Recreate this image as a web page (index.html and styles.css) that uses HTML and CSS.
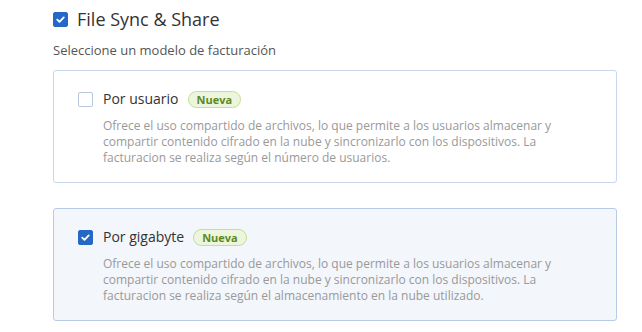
FILE: index.html
```html
<!DOCTYPE html>
<html lang="es">
<head>
    <meta charset="UTF-8">
    <title>File Sync & Share</title>
    <link rel="stylesheet" href="styles.css">
</head>
<body>
    <div class="service">
        <label class="service-header">
            <span class="check checked">
                <svg viewBox="0 0 14 14"><path d="M3.5 7.2l2.4 2.3 4.6-4.8" /></svg>
            </span>
            <span class="service-title">File Sync &amp; Share</span>
        </label>

        <p class="hint">Seleccione un modelo de facturación</p>

        <div class="plan">
            <div class="plan-head">
                <span class="check"></span>
                <span class="plan-name">Por usuario</span>
                <span class="badge">Nueva</span>
            </div>
            <p class="plan-desc">Ofrece el uso compartido de archivos, lo que permite a los usuarios almacenar y compartir contenido cifrado en la nube y sincronizarlo con los dispositivos. La facturacion se realiza según el número de usuarios.</p>
        </div>

        <div class="plan selected">
            <div class="plan-head">
                <span class="check checked">
                    <svg viewBox="0 0 14 14"><path d="M3.5 7.2l2.4 2.3 4.6-4.8" /></svg>
                </span>
                <span class="plan-name">Por gigabyte</span>
                <span class="badge">Nueva</span>
            </div>
            <p class="plan-desc">Ofrece el uso compartido de archivos, lo que permite a los usuarios almacenar y compartir contenido cifrado en la nube y sincronizarlo con los dispositivos. La facturacion se realiza según el almacenamiento en la nube utilizado.</p>
        </div>
    </div>
</body>
</html>
```

FILE: styles.css
```css
body {
    font-family: "Open Sans", Arial, sans-serif;
    background-color: #fff;
    color: #333;
    margin: 0;
}
.service {
    padding: 7px 25px 0 53px;
}
.service-header {
    display: flex;
    align-items: center;
    gap: 9px;
}
.service-title {
    font-size: 18px;
    color: #333;
}
.hint {
    margin: 10px 0 11px;
    font-size: 13px;
    color: #555;
}
.check {
    width: 15px;
    height: 15px;
    border: 1px solid #b8c6dc;
    border-radius: 2px;
    background-color: #fff;
    box-sizing: border-box;
    display: inline-flex;
    flex-shrink: 0;
}
.check.checked {
    background-color: #2668c5;
    border-color: #2668c5;
}
.check svg {
    width: 100%;
    height: 100%;
    fill: none;
    stroke: #fff;
    stroke-width: 2;
    stroke-linecap: round;
    stroke-linejoin: round;
}
.plan {
    border: 1px solid #c9d7ee;
    border-radius: 3px;
    padding: 18px 24px 16px;
    margin-bottom: 25px;
    background-color: #fff;
}
.plan.selected {
    background-color: #f3f6fb;
    border-color: #b7cbe9;
}
.plan-head {
    display: flex;
    align-items: center;
    gap: 10px;
}
.plan-name {
    font-size: 14px;
    line-height: 20px;
    color: #333;
}
.badge {
    font-size: 11px;
    font-weight: 700;
    color: #5b8a1f;
    background-color: #eef5dd;
    border: 1px solid #c4dc9c;
    border-radius: 10px;
    padding: 0 8px;
    margin-left: -1px;
}
.plan-desc {
    margin: 9px 0 0 25px;
    max-width: 460px;
    font-size: 12px;
    line-height: 16px;
    color: #999;
}
```
